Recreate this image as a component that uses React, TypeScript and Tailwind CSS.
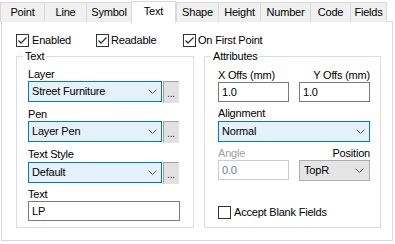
import React from "react";

const Chevron = () => (
  <svg width="9" height="5" viewBox="0 0 9 5" className="block">
    <polyline points="0.5,0.5 4.5,4.5 8.5,0.5" fill="none" stroke="#5a5a5a" strokeWidth="1" />
  </svg>
);

const Check = ({ checked }: { checked: boolean }) => (
  <div className="w-[13px] h-[13px] border border-[#333333] bg-white flex items-center justify-center shrink-0">
    {checked && (
      <svg width="11" height="11" viewBox="0 0 11 11" className="block">
        <polyline points="1.5,5.5 4,8 9.5,2.5" fill="none" stroke="#333333" strokeWidth="1.3" />
      </svg>
    )}
  </div>
);

const tabs = [
  { n: "Point", w: 44 },
  { n: "Line", w: 42 },
  { n: "Symbol", w: 45 },
  { n: "Text", w: 45, sel: true },
  { n: "Shape", w: 42 },
  { n: "Height", w: 42 },
  { n: "Number", w: 50 },
  { n: "Code", w: 40 },
  { n: "Fields", w: 37 },
];

const Combo = ({ text, w }: { text: string; w: number }) => (
  <div
    className="h-[21px] border border-[#0078d7] bg-[#e5f1fb] flex items-center justify-between pl-[3px] pr-[4px]"
    style={{ width: w }}
  >
    <span className="leading-[13px]">{text}</span>
    <Chevron />
  </div>
);

const Browse = () => (
  <div className="w-[16px] h-[22px] border border-[#a0a0a0] border-r-[#e3e3e3] border-b-[#e3e3e3] bg-[#e1e1e1] flex items-end justify-center ml-px">
    <span className="leading-[10px] text-[10px] text-[#3c2a55] pb-[3px]">...</span>
  </div>
);

export default function App() {
  return (
    <div
      className="w-[395px] h-[244px] bg-white text-black text-[11px] tracking-[-0.2px] overflow-hidden"
      style={{ fontFamily: '"Liberation Sans", Arial, sans-serif' }}
    >
      {/* tab strip */}
      <div className="flex items-end h-[22px] relative z-10">
        {tabs.map((t) =>
          t.sel ? (
            <div
              key={t.n}
              className="h-[22px] bg-white border-l border-r border-t border-[#d9d9d9] flex items-start justify-center pt-[3px] -mb-px"
              style={{ width: t.w }}
            >
              <span className="leading-[13px]">{t.n}</span>
            </div>
          ) : (
            <div
              key={t.n}
              className="h-[20px] bg-[#f0f0f0] border-t border-l border-[#d9d9d9] last:border-r flex items-center justify-center"
              style={{ width: t.w }}
            >
              <span className="leading-[13px]">{t.n}</span>
            </div>
          )
        )}
      </div>
      {/* panel */}
      <div className="ml-px w-[392px] h-[220px] -mt-px border border-[#d9d9d9] bg-white pl-[14px] pt-[12px]">
        <div className="flex items-center h-[13px]">
          <div className="flex items-center w-[80px] gap-[3px]">
            <Check checked />
            <span className="leading-[13px]">Enabled</span>
          </div>
          <div className="flex items-center w-[87px] gap-[2px]">
            <Check checked />
            <span className="leading-[13px]">Readable</span>
          </div>
          <div className="flex items-center gap-[2px]">
            <Check checked />
            <span className="leading-[13px]">On First Point</span>
          </div>
        </div>
        <div className="flex gap-[10px] mt-[9px]">
          {/* Text group */}
          <div className="relative w-[178px] h-[172px] border border-[#dcdcdc] pl-[11px] pt-[11px]">
            <span className="absolute -top-[7px] left-[6px] bg-white px-[2px] leading-[13px]">Text</span>
            <div className="leading-[13px]">Layer</div>
            <div className="flex items-start">
              <Combo text="Street Furniture" w={134} />
              <Browse />
            </div>
            <div className="leading-[13px] mt-[5px]">Pen</div>
            <div className="flex items-start">
              <Combo text="Layer Pen" w={134} />
              <Browse />
            </div>
            <div className="leading-[13px] mt-[5px]">Text Style</div>
            <div className="flex items-start mt-px">
              <Combo text="Default" w={134} />
              <Browse />
            </div>
            <div className="leading-[13px] mt-[4px]">Text</div>
            <div className="w-[152px] h-[20px] border border-[#7a7a7a] flex items-center pl-[3px]">
              <span className="leading-[13px]">LP</span>
            </div>
          </div>
          {/* Attributes group */}
          <div className="relative w-[177px] h-[172px] border border-[#dcdcdc] pl-[13px] pt-[12px]">
            <span className="absolute -top-[7px] left-[6px] bg-white px-[2px] leading-[13px]">Attributes</span>
            <div className="flex justify-between w-[152px] leading-[13px]">
              <span>X Offs (mm)</span>
              <span>Y Offs (mm)</span>
            </div>
            <div className="flex justify-between w-[152px]">
              <div className="w-[71px] h-[20px] border border-[#7a7a7a] flex items-center pl-[3px]">
                <span className="leading-[13px]">1.0</span>
              </div>
              <div className="w-[71px] h-[20px] border border-[#7a7a7a] flex items-center pl-[3px]">
                <span className="leading-[13px]">1.0</span>
              </div>
            </div>
            <div className="leading-[13px] mt-[5px]">Alignment</div>
            <div className="mt-px">
              <Combo text="Normal" w={152} />
            </div>
            <div className="flex justify-between w-[152px] leading-[13px] mt-[5px]">
              <span className="text-[#a0a0a0]">Angle</span>
              <span>Position</span>
            </div>
            <div className="flex justify-between items-start w-[152px]">
              <div className="w-[71px] h-[20px] border border-[#cccccc] flex items-center pl-[3px]">
                <span className="leading-[13px] text-[#6d7a86]">0.0</span>
              </div>
              <div className="w-[71px] h-[21px] border border-[#adadad] bg-[#e5e5e5] flex items-center justify-between pl-[4px] pr-[5px]">
                <span className="leading-[13px]">TopR</span>
                <Chevron />
              </div>
            </div>
            <div className="flex items-center gap-[3px] mt-[25px]">
              <Check checked={false} />
              <span className="leading-[13px]">Accept Blank Fields</span>
            </div>
          </div>
        </div>
      </div>
    </div>
  );
}
